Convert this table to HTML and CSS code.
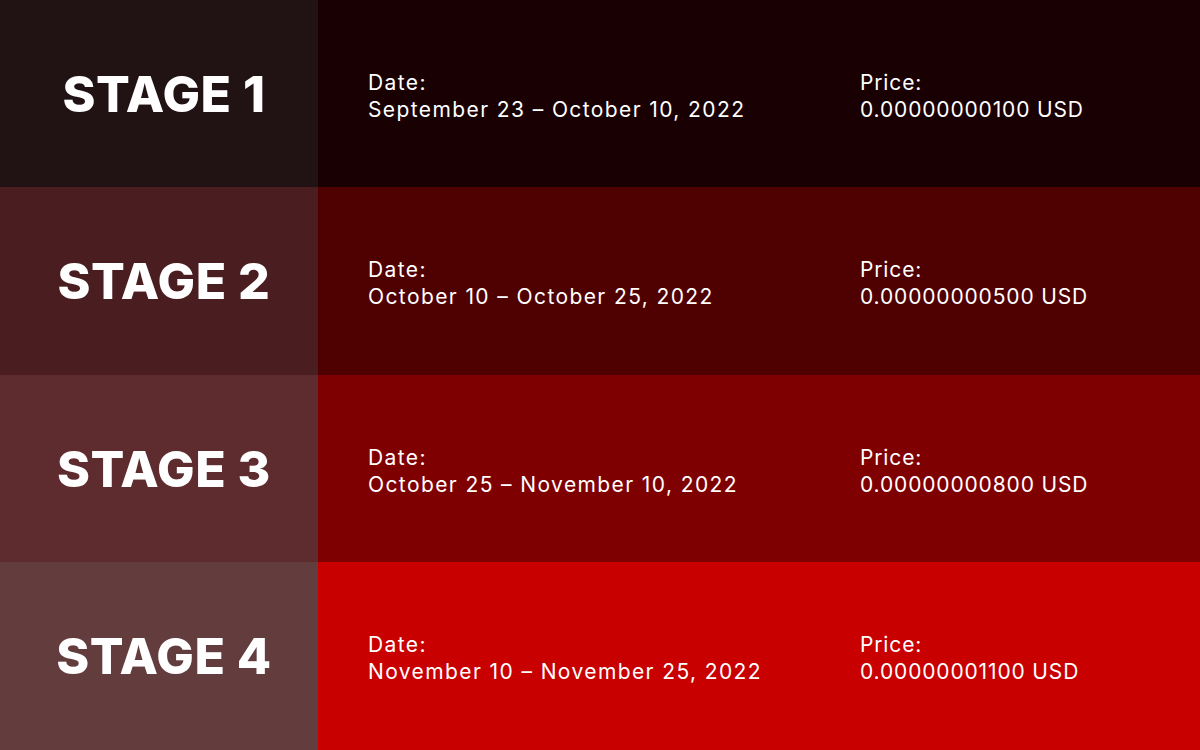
FILE: index.html
```html
<!DOCTYPE html>
<html lang="en">
<head>
<meta charset="utf-8">
<title>Stages</title>
<link rel="stylesheet" href="styles.css">
</head>
<body>
<main class="stages">
  <section class="stage stage-1">
    <div class="stage-name">STAGE 1</div>
    <div class="stage-info">
      <div class="info date"><span>Date:</span><span>September 23 – October 10, 2022</span></div>
      <div class="info price"><span>Price:</span><span>0.00000000100 USD</span></div>
    </div>
  </section>
  <section class="stage stage-2">
    <div class="stage-name">STAGE 2</div>
    <div class="stage-info">
      <div class="info date"><span>Date:</span><span>October 10 – October 25, 2022</span></div>
      <div class="info price"><span>Price:</span><span>0.00000000500 USD</span></div>
    </div>
  </section>
  <section class="stage stage-3">
    <div class="stage-name">STAGE 3</div>
    <div class="stage-info">
      <div class="info date"><span>Date:</span><span>October 25 – November 10, 2022</span></div>
      <div class="info price"><span>Price:</span><span>0.00000000800 USD</span></div>
    </div>
  </section>
  <section class="stage stage-4">
    <div class="stage-name">STAGE 4</div>
    <div class="stage-info">
      <div class="info date"><span>Date:</span><span>November 10 – November 25, 2022</span></div>
      <div class="info price"><span>Price:</span><span>0.00000001100 USD</span></div>
    </div>
  </section>
</main>
</body>
</html>
```
FILE: styles.css
```css
html, body {
  margin: 0;
  padding: 0;
}
body {
  width: 1200px;
  height: 750px;
  overflow: hidden;
  font-family: "Inter", "Open Sans", sans-serif;
  color: #ffffff;
}
.stages {
  display: grid;
  grid-template-rows: 187px 188px 187px 188px;
  height: 750px;
}
.stage {
  display: grid;
  grid-template-columns: 318px 1fr;
}
.stage-name {
  display: flex;
  align-items: center;
  justify-content: center;
  padding-left: 10px;
  font-size: 50px;
  font-weight: 800;
  letter-spacing: 0.5px;
}
.stage-info {
  display: grid;
  grid-template-columns: 492px 1fr;
  align-items: center;
  padding-left: 50px;
  padding-top: 4px;
}
.info {
  display: flex;
  flex-direction: column;
  font-size: 21px;
  line-height: 27px;
  font-weight: 400;
  letter-spacing: 1.1px;
}
.date {
  letter-spacing: 1.4px;
}
.price {
  letter-spacing: 0.85px;
}
.stage-1 .stage-name { background: #211214; }
.stage-1 .stage-info { background: #190002; }
.stage-2 .stage-name { background: #4a1e20; }
.stage-2 .stage-info { background: #4f0000; }
.stage-3 .stage-name { background: #5e2b2e; }
.stage-3 .stage-info { background: #7f0000; }
.stage-4 .stage-name { background: #633c3d; }
.stage-4 .stage-info { background: #c90000; }
```
